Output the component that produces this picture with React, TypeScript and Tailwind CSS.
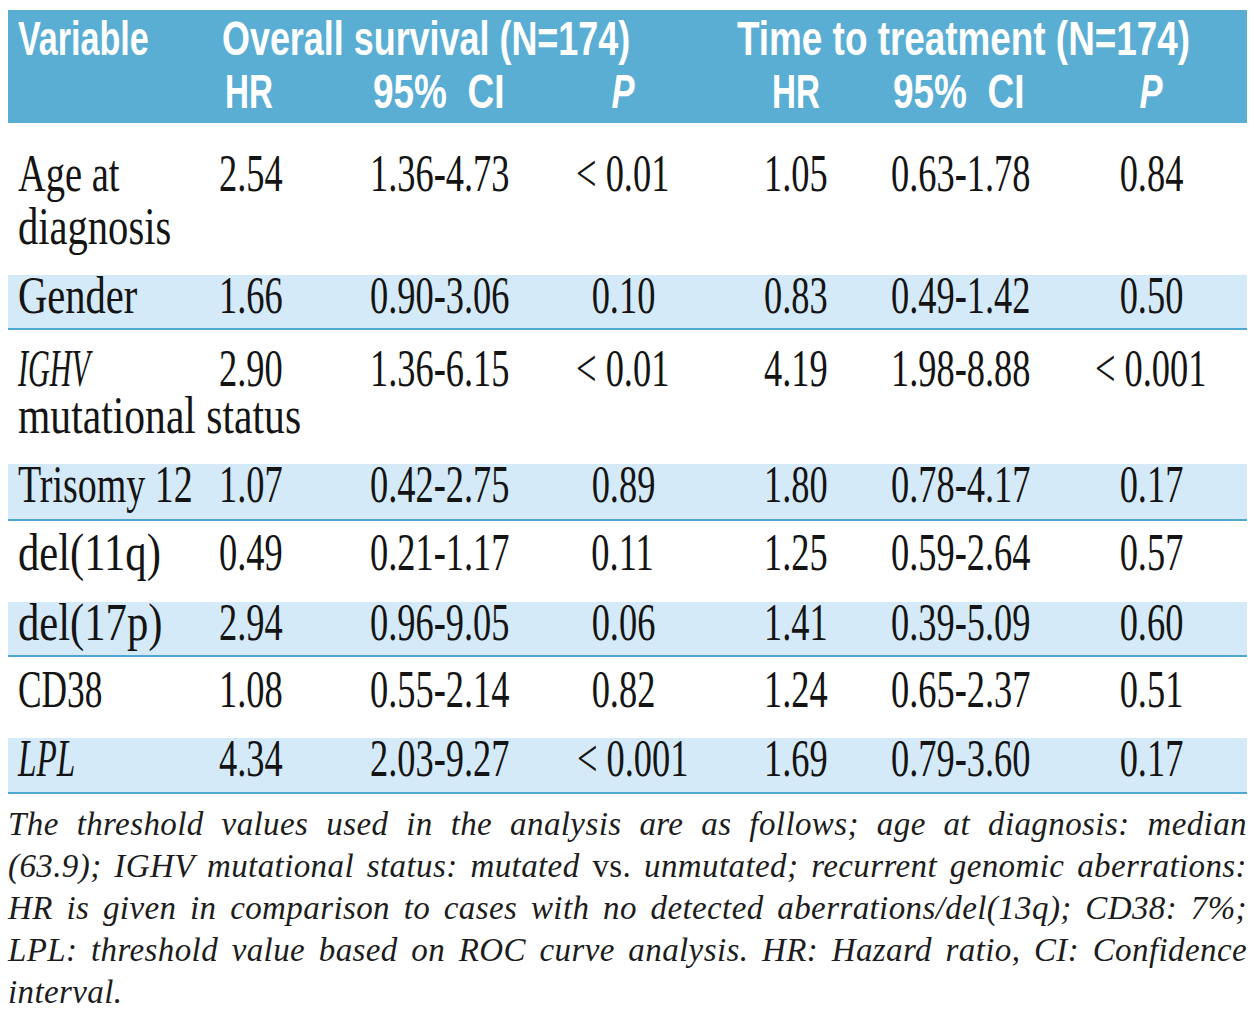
import React from "react";

const sans = "font-['Liberation_Sans',Arial,sans-serif]";
const serif = "font-['Liberation_Serif','Times_New_Roman',serif]";
const cols = "grid grid-cols-[211px_151px_183px_140px_198px_164px_192px]";

type Line = { t: string; s: string; mt?: string; it?: boolean };
type Row = {
  blue: boolean;
  h: string;
  pt: string;
  label: Line[];
  vals: string[];
};

const rows: Row[] = [
  {
    blue: false,
    h: "h-[152px]",
    pt: "pt-[30px]",
    label: [
      { t: "Age at", s: "scale-x-[0.74]" },
      { t: "diagnosis", s: "scale-x-[0.78]", mt: "mt-[11px]" },
    ],
    vals: ["2.54", "1.36-4.73", "< 0.01", "1.05", "0.63-1.78", "0.84"],
  },
  {
    blue: true,
    h: "h-[55px]",
    pt: "pt-0",
    label: [{ t: "Gender", s: "scale-x-[0.78]" }],
    vals: ["1.66", "0.90-3.06", "0.10", "0.83", "0.49-1.42", "0.50"],
  },
  {
    blue: false,
    h: "h-[134px]",
    pt: "pt-[18px]",
    label: [
      { t: "IGHV", s: "scale-x-[0.58]", it: true },
      { t: "mutational status", s: "scale-x-[0.80]", mt: "mt-[5px]" },
    ],
    vals: ["2.90", "1.36-6.15", "< 0.01", "4.19", "1.98-8.88", "< 0.001"],
  },
  {
    blue: true,
    h: "h-[57px]",
    pt: "pt-0",
    label: [{ t: "Trisomy 12", s: "scale-x-[0.73]" }],
    vals: ["1.07", "0.42-2.75", "0.89", "1.80", "0.78-4.17", "0.17"],
  },
  {
    blue: false,
    h: "h-[81px]",
    pt: "pt-[11px]",
    label: [{ t: "del(11q)", s: "scale-x-[0.82]" }],
    vals: ["0.49", "0.21-1.17", "0.11", "1.25", "0.59-2.64", "0.57"],
  },
  {
    blue: true,
    h: "h-[55px]",
    pt: "pt-0",
    label: [{ t: "del(17p)", s: "scale-x-[0.82]" }],
    vals: ["2.94", "0.96-9.05", "0.06", "1.41", "0.39-5.09", "0.60"],
  },
  {
    blue: false,
    h: "h-[81px]",
    pt: "pt-[12px]",
    label: [{ t: "CD38", s: "scale-x-[0.68]" }],
    vals: ["1.08", "0.55-2.14", "0.82", "1.24", "0.65-2.37", "0.51"],
  },
  {
    blue: true,
    h: "h-[56px]",
    pt: "pt-0",
    label: [{ t: "LPL", s: "scale-x-[0.64]", it: true }],
    vals: ["4.34", "2.03-9.27", "< 0.001", "1.69", "0.79-3.60", "0.17"],
  },
];

function Num({ v, center }: { v: string; center?: boolean }) {
  return (
    <span
      className={`inline-block whitespace-pre scale-x-[0.70] ${
        center ? "origin-center" : "origin-left"
      }`}
    >
      {v}
    </span>
  );
}

function BodyRow({ r }: { r: Row }) {
  return (
    <div
      className={`${cols} ${r.h} ${r.pt} ${
        r.blue ? "bg-[#d4eaf8] border-b-2 border-[#4ea8d2]" : "bg-white"
      } ${serif} text-[52px] leading-[42px] text-[#141414]`}
    >
      <div className="pl-[10px]">
        {r.label.map((l, i) => (
          <div key={i} className={l.mt ?? ""}>
            <span
              className={`inline-block whitespace-pre origin-left ${l.s} ${
                l.it ? "italic" : ""
              }`}
            >
              {l.t}
            </span>
          </div>
        ))}
      </div>
      <div>
        <Num v={r.vals[0]} />
      </div>
      <div>
        <Num v={r.vals[1]} />
      </div>
      <div className="text-center">
        <Num v={r.vals[2]} center />
      </div>
      <div className="pl-[71px]">
        <Num v={r.vals[3]} />
      </div>
      <div>
        <Num v={r.vals[4]} />
      </div>
      <div className="text-center">
        <Num v={r.vals[5]} center />
      </div>
    </div>
  );
}

function Header() {
  return (
    <div
      className={`bg-[#5aaed3] h-[113px] pt-[2px] text-white font-bold ${sans} text-[48px] leading-[53px] overflow-hidden`}
    >
      <div className={cols}>
        <div className="pl-[10px]">
          <span className="inline-block whitespace-pre origin-left scale-x-[0.71]">
            Variable
          </span>
        </div>
        <div className="col-span-3 pl-[3px]">
          <span className="inline-block whitespace-pre origin-left scale-x-[0.748]">
            Overall survival (N=174)
          </span>
        </div>
        <div className="col-span-3 pl-[44px]">
          <span className="inline-block whitespace-pre origin-left scale-x-[0.768]">
            Time to treatment (N=174)
          </span>
        </div>
      </div>
      <div className={cols}>
        <div />
        <div className="pl-[6px]">
          <span className="inline-block whitespace-pre origin-left scale-x-[0.69]">
            HR
          </span>
        </div>
        <div className="pl-[3px]">
          <span className="inline-block whitespace-pre origin-left scale-x-[0.77]">
            {"95%\u00a0\u00a0CI"}
          </span>
        </div>
        <div className="text-center">
          <span className="inline-block whitespace-pre origin-center scale-x-[0.72] italic">
            P
          </span>
        </div>
        <div className="pl-[79px]">
          <span className="inline-block whitespace-pre origin-left scale-x-[0.69]">
            HR
          </span>
        </div>
        <div className="pl-[2px]">
          <span className="inline-block whitespace-pre origin-left scale-x-[0.77]">
            {"95%\u00a0\u00a0CI"}
          </span>
        </div>
        <div className="text-center">
          <span className="inline-block whitespace-pre origin-center scale-x-[0.72] italic">
            P
          </span>
        </div>
      </div>
    </div>
  );
}

function Footnote() {
  const jl = "text-justify [text-align-last:justify]";
  return (
    <div
      className={`w-[1239px] pt-[9px] ${serif} italic text-[33px] leading-[42px] tracking-[0.4px] text-[#1c1c1c]`}
    >
      <div className={jl}>
        The threshold values used in the analysis are as follows; age at
        diagnosis: median
      </div>
      <div className={jl}>
        (63.9); IGHV mutational status: mutated{" "}
        <span className="not-italic">vs.</span> unmutated; recurrent genomic
        aberrations:
      </div>
      <div className={jl}>
        HR is given in comparison to cases with no detected
        aberrations/del(13q); CD38: 7%;
      </div>
      <div className={jl}>
        LPL: threshold value based on ROC curve analysis. HR: Hazard ratio, CI:
        Confidence
      </div>
      <div>interval.</div>
    </div>
  );
}

export default function App() {
  return (
    <div className="w-[1260px] h-[1027px] overflow-hidden bg-white pl-[8px] pt-[10px]">
      <div className="w-[1239px]">
        <Header />
        {rows.map((r, i) => (
          <BodyRow key={i} r={r} />
        ))}
        <Footnote />
      </div>
    </div>
  );
}
